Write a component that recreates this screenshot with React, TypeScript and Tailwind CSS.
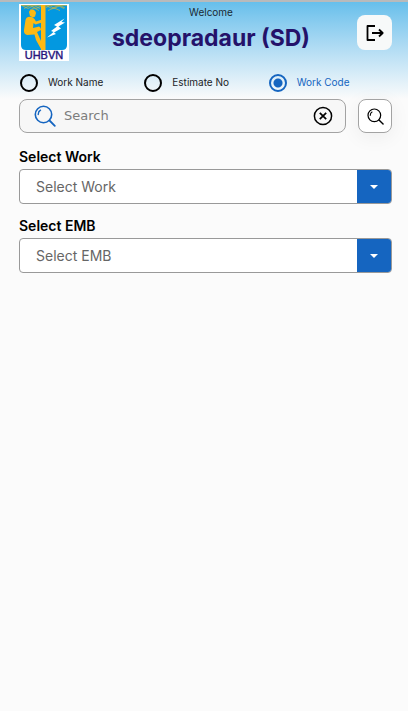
import { useState } from "react";

function Logo() {
  return (
    <svg viewBox="0 0 50 57" role="img" aria-label="UHBVN" className="h-[57px] w-[50px] shrink-0">
      <rect width="50" height="57" fill="#fff" />
      <path d="M2 1H48V41Q48 46 43 46H7Q2 46 2 41Z" fill="#0398e0" />
      <path
        d="M2 1.5H48M3 1.5L9 4.5L15 1.5L21 4.5M27 1.5L33 4.5L39 1.5L45 4.5M5 4.5L11 1.5L17 4.5L22 2M27 3.5L31 1.5L35 4.5L41 1.5L46 4M11 6L15 4L20 6.5M29 6.5L35 4L41 6.5"
        fill="none"
        stroke="#d0b83c"
        strokeWidth="0.7"
      />
      <rect x="22" y="1" width="4.5" height="45" fill="#fdb913" />
      <path d="M10 8Q10.500 5.500 13.5 5.5Q16 5.5 17 9L16 12.5L14 13.5L11 12Z" fill="#fdb913" />
      <path
        d="M9 13Q13 12 15.5 15L17 17.500L23 15.500V18.500L16.500 20.5L14.5 19L14 24L20 22.500Q22 23 22 26L18 28L22 37L24 45H22L17 36L15.500 30.500L8 31Q4.500 30 5 26L6.500 16Q7 13.500 9 13Z"
        fill="#fdb913"
      />
      <path
        d="M45.5 14.5L35 21L38 22.5L32 27L34.5 28L28 33.5L37 30L35 28.5L42 24.5L39.5 22.5L46 18.5L42.5 18Z"
        fill="#fff"
      />
      <text
        x="25"
        y="55"
        textAnchor="middle"
        fill="#26147d"
        stroke="#26147d"
        strokeWidth="0.4"
        className="font-['Liberation_Sans',Arial,sans-serif] text-[11px]"
      >
        UHBVN
      </text>
    </svg>
  );
}

function SearchIcon({ className }: { className: string }) {
  return (
    <svg viewBox="0 0 22 22" fill="none" stroke="currentColor" strokeLinecap="round" aria-hidden="true" className={className}>
      <circle cx="9.5" cy="9.5" r="8.2" strokeWidth="1.6" />
      <path d="M15.5 15.5L20.8 20.8" strokeWidth="1.8" />
      <path d="M4.2 9.5Q4.3 6.3 6.5 5.2" strokeWidth="1.4" />
    </svg>
  );
}

function SelectField({ id, label }: { id: string; label: string }) {
  return (
    <div className="flex flex-col">
      <label htmlFor={id} className="pt-1.5 pb-0.5 text-sm leading-5 font-semibold text-black">
        {label}
      </label>
      <div className="relative flex h-[35px] overflow-hidden rounded border border-[#999999] bg-white">
        <select id={id} className="w-full appearance-none bg-transparent pr-10 pl-4 text-sm text-[#666666] outline-none">
          <option>{label}</option>
        </select>
        <span className="pointer-events-none absolute inset-y-0 right-0 flex w-[34px] items-center justify-center bg-[#1565c0]">
          <svg viewBox="0 0 8 4" aria-hidden="true" className="h-1 w-2 fill-white">
            <path d="M0 0H8L4 4Z" />
          </svg>
        </span>
      </div>
    </div>
  );
}

const modes = ["Work Name", "Estimate No", "Work Code"];

export default function App() {
  const [mode, setMode] = useState("Work Code");
  const [query, setQuery] = useState("");

  return (
    <div className="min-h-screen bg-[#fbfbfb] font-[Inter,sans-serif]">
      <div className="border-t-2 border-[#b8babb] bg-linear-to-b from-[#66bfeb] to-[#fbfbfb] pr-4 pl-[19px]">
        <header className="flex h-[68px] items-start justify-between">
          <div className="pt-0.5">
            <Logo />
          </div>
          <div className="flex flex-col items-center pt-0.5 pr-1">
            <p className="text-[10px] leading-4 text-[#1b2a33]">Welcome</p>
            <h1 className="text-[23px] leading-9 font-bold text-[#24126a]">sdeopradaur (SD)</h1>
          </div>
          <button aria-label="Log out" className="mt-[13px] flex size-[35px] items-center justify-center rounded-lg bg-[#f7f9f9] text-black">
            <svg
              viewBox="0 0 18 16"
              fill="none"
              stroke="currentColor"
              strokeWidth="1.8"
              strokeLinejoin="round"
              aria-hidden="true"
              className="h-4 w-[18px]"
            >
              <path d="M9 1H1.5V15H9M6 8H17M13 4.5L16.7 8L13 11.5" />
            </svg>
          </button>
        </header>
        <div role="radiogroup" aria-label="Search by" className="grid grid-cols-3 pb-1">
          {modes.map((m) => (
            <label key={m} className="flex h-[25px] items-center gap-2.5 pl-px text-[10px] text-[#1b2226] has-checked:text-[#1565c0]">
              <input
                type="radio"
                name="mode"
                checked={mode === m}
                onChange={() => setMode(m)}
                className="size-[18px] shrink-0 appearance-none rounded-full border-2 border-black checked:border-[#1565c0] checked:bg-[radial-gradient(circle,#1565c0_4px,transparent_5px)]"
              />
              {m}
            </label>
          ))}
        </div>
      </div>
      <main className="flex flex-col pr-4 pl-[19px]">
        <div className="mb-2 flex gap-3">
          <div className="flex h-[34px] min-w-0 flex-1 items-center rounded-lg border border-[#a3a3a3] bg-[#f7f7f7] pr-3 pl-3.5">
            <SearchIcon className="size-[22px] shrink-0 text-[#1565c0]" />
            <input
              aria-label="Search"
              placeholder="Search"
              value={query}
              onChange={(e) => setQuery(e.target.value)}
              className="min-w-0 flex-1 bg-transparent px-2 font-['DejaVu_Sans',sans-serif] text-[13px] text-[#555555] outline-none placeholder:text-[#7d7d7d]"
            />
            <button aria-label="Clear" onClick={() => setQuery("")} className="text-black">
              <svg viewBox="0 0 20 20" fill="none" stroke="currentColor" strokeWidth="1.5" aria-hidden="true" className="size-5">
                <circle cx="10" cy="10" r="8.6" />
                <path d="M6.8 6.8L13.2 13.2M13.2 6.8L6.8 13.2" strokeWidth="1.7" />
              </svg>
            </button>
          </div>
          <button
            aria-label="Run search"
            className="flex size-[34px] shrink-0 items-center justify-center rounded-lg border border-[#a3a3a3] bg-white text-black shadow-[0_4px_20px_rgba(0,0,0,0.06)]"
          >
            <SearchIcon className="size-[17px]" />
          </button>
        </div>
        <div className="flex flex-col gap-1.5">
          <SelectField id="work" label="Select Work" />
          <SelectField id="emb" label="Select EMB" />
        </div>
      </main>
    </div>
  );
}
